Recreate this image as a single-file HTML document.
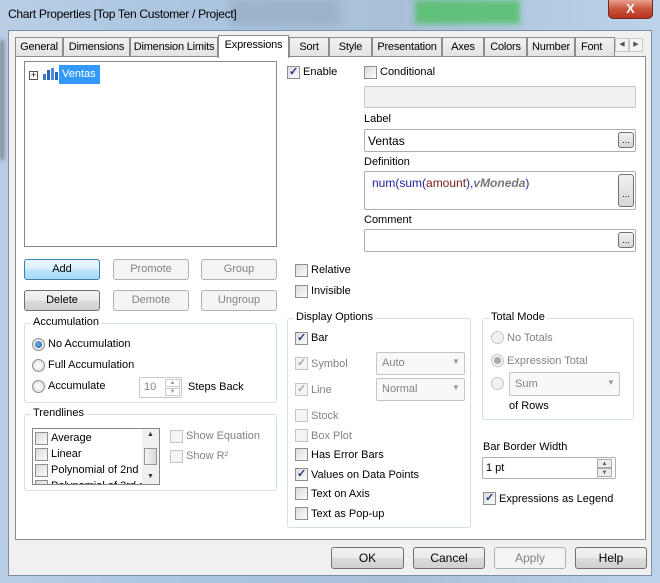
<!DOCTYPE html>
<html><head><meta charset="utf-8"><style>
*{box-sizing:border-box;margin:0;padding:0}
body{width:660px;height:583px;overflow:hidden;position:relative;font-family:"Liberation Sans",sans-serif;font-size:11px;color:#000;
background:linear-gradient(90deg,#b9cfe6 0,#aac4df 30%,#a9c0d8 60%,#bdd3ea 100%)}
.a{position:absolute}
.t{position:absolute;white-space:nowrap;top:0}
.btn{position:absolute;height:21px;border:1px solid #707070;border-radius:3px;background:linear-gradient(#f2f2f2 0,#ebebeb 50%,#dddddd 51%,#cfcfcf 100%);text-align:center;line-height:19px}
.dis{border-color:#adb2b5;background:#f4f4f4;color:#838383}
.cb{position:absolute;width:13px;height:13px;border:1px solid #8e8f8f;background:linear-gradient(135deg,#dcdcdc,#fbfbfb)}
.cb.on::after{content:"✓";position:absolute;left:1px;top:-2px;font-size:11px;font-weight:bold;color:#21398c}
.cb.d{border-color:#c5c5c5;background:#f4f4f4}
.cb.d.on::after{color:#a8a8a8}
.rb{position:absolute;width:13px;height:13px;border-radius:50%;border:1px solid #8e8f8f;background:radial-gradient(#fff,#d8d8d8)}
.rb.on::after{content:"";position:absolute;left:2px;top:2px;width:7px;height:7px;border-radius:50%;background:radial-gradient(circle at 40% 40%,#6ab1ec,#1a5d9c)}
.rb.d{border-color:#c5c5c5;background:#f1f1f1}
.rb.d.on::after{background:#a8a8a8}
.grp{position:absolute;border:1px solid #d5dfe5;border-radius:3px}
.grp>span{position:absolute;top:-8px;left:6px;background:#fff;padding:0 2px;white-space:nowrap}
.in{position:absolute;border:1px solid #abadb3;background:#fff;border-radius:2px}
.dots{position:absolute;width:16px;height:16px;border:1px solid #707070;border-radius:3px;background:linear-gradient(#f2f2f2,#d6d6d6);font-size:9px;text-align:center;line-height:14px}
.tab{position:absolute;top:37px;height:20px;border:1px solid #898c95;border-bottom:none;background:linear-gradient(#f2f2f2,#e2e2e2);text-align:center;line-height:18px;white-space:nowrap;overflow:hidden;letter-spacing:-0.2px}
.g{color:#838383}
</style></head><body>
<div class="a" style="left:230px;top:0;width:110px;height:26px;background:#8fa3b8;opacity:.5;filter:blur(4px)"></div>
<div class="a" style="left:415px;top:0;width:105px;height:24px;background:#5fc07a;filter:blur(3px)"></div>
<div class="a" style="left:0;top:40px;width:4px;height:120px;background:#444;filter:blur(2px);opacity:.6"></div>
<div class="t" style="left:8px;top:7px;font-size:12px;letter-spacing:-0.3px">Chart Properties [Top Ten Customer / Project]</div>
<div class="a" style="left:608px;top:0;width:45px;height:19px;border:1px solid #6b2a22;border-top:none;border-radius:0 0 5px 5px;background:linear-gradient(#e8a290,#c8543e 50%,#b8331e);color:#fff;font-weight:bold;text-align:center;font-size:13px;line-height:17px">X</div>
<div class="a" style="left:8px;top:30px;width:644px;height:546px;background:#f0f0f0;border:1px solid #7b8ea3"></div>
<div class="tab" style="left:15px;width:48px">General</div>
<div class="tab" style="left:63px;width:67px">Dimensions</div>
<div class="tab" style="left:130px;width:88px">Dimension Limits</div>
<div class="tab" style="left:289px;width:40px">Sort</div>
<div class="tab" style="left:329px;width:43px">Style</div>
<div class="tab" style="left:372px;width:70px">Presentation</div>
<div class="tab" style="left:442px;width:42px">Axes</div>
<div class="tab" style="left:484px;width:43px">Colors</div>
<div class="tab" style="left:527px;width:48px">Number</div>
<div class="tab" style="left:575px;width:40px;text-align:left;padding-left:5px">Font</div>
<div class="a" style="left:615px;top:38px;width:14px;height:14px;border:1px solid #c8c8c8;background:#f4f4f4;font-size:7px;text-align:center;line-height:12px;color:#555">◀</div>
<div class="a" style="left:629px;top:38px;width:14px;height:14px;border:1px solid #c8c8c8;background:#f4f4f4;font-size:7px;text-align:center;line-height:12px;color:#555">▶</div>
<div class="a" style="left:15px;top:56px;width:631px;height:484px;background:#fff;border:1px solid #898c95"></div>
<div class="a" style="left:218px;top:35px;width:71px;height:23px;background:#fff;border:1px solid #898c95;border-bottom:none;text-align:center;line-height:19px;letter-spacing:-0.2px">Expressions</div>
<div class="a" style="left:24px;top:61px;width:253px;height:186px;border:1px solid #828790;background:#fff"></div>
<div class="a" style="left:29px;top:71px;width:9px;height:9px;border:1px solid #555;font-size:9px;line-height:7px;text-align:center">+</div>
<svg class="a" style="left:42px;top:67px" width="16" height="14"><rect x="1" y="7" width="3" height="6" fill="#3a78c8"/><rect x="5" y="3" width="3" height="10" fill="#2f64b4"/><rect x="9" y="1" width="3" height="12" fill="#4a8ad8"/><rect x="13" y="5" width="3" height="8" fill="#2f64b4"/></svg>
<div class="a" style="left:59px;top:65px;width:41px;height:19px;background:#3399ff;color:#fff;line-height:19px;padding-left:3px">Ventas</div>
<div class="btn" style="left:24px;top:259px;width:76px;border-color:#3c7fb1;background:linear-gradient(#eaf6fd,#d9f0fc 50%,#bee6fd 51%,#a7d9f5)">Add</div>
<div class="btn dis" style="left:113px;top:259px;width:76px">Promote</div>
<div class="btn dis" style="left:201px;top:259px;width:76px">Group</div>
<div class="btn" style="left:24px;top:290px;width:76px">Delete</div>
<div class="btn dis" style="left:113px;top:290px;width:76px">Demote</div>
<div class="btn dis" style="left:201px;top:290px;width:76px">Ungroup</div>
<div class="grp" style="left:24px;top:323px;width:253px;height:80px"><span>Accumulation</span></div>
<div class="rb on" style="left:32px;top:338px"></div><div class="t" style="left:48px;top:338px">No Accumulation</div>
<div class="rb" style="left:32px;top:359px"></div><div class="t" style="left:48px;top:359px">Full Accumulation</div>
<div class="rb" style="left:32px;top:380px"></div><div class="t" style="left:48px;top:380px">Accumulate</div>
<div class="in" style="left:139px;top:377px;width:43px;height:21px;border-color:#c8c8c8"><span class="g" style="position:absolute;left:4px;top:3px">10</span><div class="a" style="left:25px;top:1px;width:15px;height:8px;border:1px solid #ccc;font-size:6px;text-align:center;color:#999;line-height:7px">▲</div><div class="a" style="left:25px;top:10px;width:15px;height:8px;border:1px solid #ccc;font-size:6px;text-align:center;color:#999;line-height:7px">▼</div></div>
<div class="t" style="left:188px;top:381px">Steps Back</div>
<div class="grp" style="left:24px;top:414px;width:253px;height:77px"><span>Trendlines</span></div>
<div class="a" style="left:32px;top:428px;width:128px;height:57px;border:1px solid #828790;background:#fff;overflow:hidden">
<div class="cb" style="left:2px;top:3px"></div><div class="t" style="left:18px;top:3px">Average</div>
<div class="cb" style="left:2px;top:19px"></div><div class="t" style="left:18px;top:19px">Linear</div>
<div class="cb" style="left:2px;top:35px"></div><div class="t" style="left:18px;top:35px">Polynomial of 2nd d</div>
<div class="cb" style="left:2px;top:51px"></div><div class="t" style="left:18px;top:51px">Polynomial of 3rd d</div>
<div class="a" style="left:109px;top:0;width:17px;height:55px;background:#f0f0f0"><div class="a" style="left:2px;top:19px;width:13px;height:17px;border:1px solid #999;background:linear-gradient(90deg,#f4f4f4,#d8d8d8)"></div><span class="a" style="left:5px;top:2px;font-size:7px;color:#333">▲</span><span class="a" style="left:5px;top:44px;font-size:7px;color:#333">▼</span></div>
</div>
<div class="cb d" style="left:170px;top:430px"></div><div class="t g" style="left:186px;top:430px">Show Equation</div>
<div class="cb d" style="left:170px;top:450px"></div><div class="t g" style="left:186px;top:450px">Show R²</div>
<div class="cb on" style="left:287px;top:66px"></div><div class="t" style="left:303px;top:66px">Enable</div>
<div class="cb" style="left:364px;top:66px"></div><div class="t" style="left:380px;top:66px">Conditional</div>
<div class="in" style="left:364px;top:86px;width:272px;height:22px;background:#f0f0f0;border-color:#c5c5c5"></div>
<div class="t" style="left:364px;top:113px">Label</div>
<div class="in" style="left:364px;top:129px;width:272px;height:23px"><span class="a" style="left:3px;top:4px;font-size:12px">Ventas</span><div class="dots" style="left:253px;top:2px">...</div></div>
<div class="t" style="left:364px;top:156px">Definition</div>
<div class="in" style="left:364px;top:171px;width:272px;height:39px"><span class="a" style="left:7px;top:4px;font-size:12px"><span style="color:#1c1c9a">num(sum(</span><span style="color:#7a1a1a">amount</span><span style="color:#1c1c9a">),</span><i style="color:#777;font-weight:bold">vMoneda</i><span style="color:#1c1c9a">)</span></span><div class="dots" style="left:253px;top:2px;height:33px;line-height:38px">...</div></div>
<div class="t" style="left:364px;top:214px">Comment</div>
<div class="in" style="left:364px;top:229px;width:272px;height:23px"><div class="dots" style="left:253px;top:2px">...</div></div>
<div class="cb" style="left:295px;top:264px"></div><div class="t" style="left:311px;top:264px">Relative</div>
<div class="cb" style="left:295px;top:285px"></div><div class="t" style="left:311px;top:285px">Invisible</div>
<div class="grp" style="left:287px;top:318px;width:184px;height:210px"><span>Display Options</span></div>
<div class="cb on" style="left:295px;top:332px"></div><div class="t" style="left:311px;top:332px">Bar</div>
<div class="cb d on" style="left:295px;top:357px"></div><div class="t g" style="left:311px;top:358px">Symbol</div>
<div class="in" style="left:376px;top:352px;width:89px;height:23px;border-color:#c5c5c5;background:#f8f8f8"><span class="a g" style="left:5px;top:4px">Auto</span><span class="a" style="left:75px;top:4px;font-size:8px;color:#999">▼</span></div>
<div class="cb d on" style="left:295px;top:383px"></div><div class="t g" style="left:311px;top:384px">Line</div>
<div class="in" style="left:376px;top:378px;width:89px;height:23px;border-color:#c5c5c5;background:#f8f8f8"><span class="a g" style="left:5px;top:4px">Normal</span><span class="a" style="left:75px;top:4px;font-size:8px;color:#999">▼</span></div>
<div class="cb d" style="left:295px;top:409px"></div><div class="t g" style="left:311px;top:410px">Stock</div>
<div class="cb d" style="left:295px;top:429px"></div><div class="t g" style="left:311px;top:430px">Box Plot</div>
<div class="cb" style="left:295px;top:448px"></div><div class="t" style="left:311px;top:449px">Has Error Bars</div>
<div class="cb on" style="left:295px;top:468px"></div><div class="t" style="left:311px;top:469px">Values on Data Points</div>
<div class="cb" style="left:295px;top:487px"></div><div class="t" style="left:311px;top:488px">Text on Axis</div>
<div class="cb" style="left:295px;top:507px"></div><div class="t" style="left:311px;top:508px">Text as Pop-up</div>
<div class="grp" style="left:482px;top:318px;width:152px;height:102px"><span>Total Mode</span></div>
<div class="rb d" style="left:491px;top:331px"></div><div class="t g" style="left:507px;top:332px">No Totals</div>
<div class="rb d on" style="left:491px;top:354px"></div><div class="t g" style="left:507px;top:355px">Expression Total</div>
<div class="rb d" style="left:491px;top:377px"></div>
<div class="in" style="left:509px;top:372px;width:111px;height:24px;border-color:#c5c5c5;background:#f8f8f8"><span class="a g" style="left:5px;top:5px">Sum</span><span class="a" style="left:97px;top:5px;font-size:8px;color:#999">▼</span></div>
<div class="t" style="left:509px;top:400px">of Rows</div>
<div class="t" style="left:483px;top:441px">Bar Border Width</div>
<div class="in" style="left:482px;top:457px;width:134px;height:22px"><span class="a" style="left:3px;top:4px">1 pt</span><div class="a" style="left:114px;top:1px;width:15px;height:9px;border:1px solid #aaa;background:#eee;font-size:6px;text-align:center;line-height:8px;color:#555">▲</div><div class="a" style="left:114px;top:10px;width:15px;height:9px;border:1px solid #aaa;background:#eee;font-size:6px;text-align:center;line-height:8px;color:#555">▼</div></div>
<div class="cb on" style="left:483px;top:492px"></div><div class="t" style="left:499px;top:493px">Expressions as Legend</div>
<div class="btn" style="left:331px;top:547px;width:73px;height:22px;line-height:20px;font-size:12px">OK</div>
<div class="btn" style="left:413px;top:547px;width:72px;height:22px;line-height:20px;font-size:12px">Cancel</div>
<div class="btn dis" style="left:494px;top:547px;width:72px;height:22px;line-height:20px;font-size:12px">Apply</div>
<div class="btn" style="left:575px;top:547px;width:72px;height:22px;line-height:20px;font-size:12px">Help</div>
</body></html>
